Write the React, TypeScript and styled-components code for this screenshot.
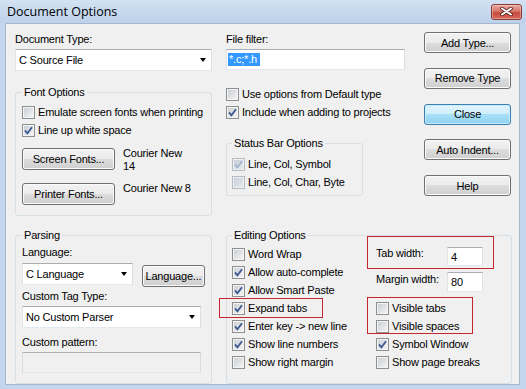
import styled, { createGlobalStyle } from "styled-components";

const GlobalStyle = createGlobalStyle`
  html, body {
    margin: 0;
    padding: 0;
  }
  body {
    font-family: "Liberation Sans", Arial, sans-serif;
    font-size: 11px;
    letter-spacing: -0.2px;
    color: #000;
    background: #c3d6ed;
  }
`

const Window = styled.div`
  width: 526px;
  height: 389px;
  display: flex;
  flex-direction: column;
  background: #c3d6ed;
  overflow: hidden;
`

const TitleBar = styled.div`
  flex: none;
  height: 23px;
  padding: 0 4px 0 7px;
  display: flex;
  align-items: center;
  justify-content: space-between;
  background: linear-gradient(#d3e2f3, #bcd1ea);
`

const Title = styled.span`
  font-family: "Open Sans", "Noto Sans", sans-serif;
  font-size: 12.5px;
  letter-spacing: 0;
`

const CloseButton = styled.div`
  width: 31px;
  height: 16px;
  box-sizing: border-box;
  border: 1px solid #8b3b36;
  border-radius: 3px;
  background: linear-gradient(#eaaaa0, #d7766a 45%, #c54a3d 55%, #d86c5e);
  box-shadow: inset 0 0 0 1px rgba(255, 255, 255, 0.3);
  display: flex;
  align-items: center;
  justify-content: center;
`

const Body = styled.div`
  flex: 1;
  margin: 0 6px 4px 5px;
  border: 1px solid #a6b8cf;
  background: #f0f0f0;
  padding: 9px 7px 0 9px;
  display: grid;
  grid-template-columns: 197px 184px 88px;
  grid-template-rows: auto 1fr;
  column-gap: 14px;
  row-gap: 13px;
`

const Column = styled.div`
  display: flex;
  flex-direction: column;
  align-items: flex-start;
`

const ButtonColumn = styled.div`
  display: flex;
  flex-direction: column;
  gap: 14.75px;
  margin-top: -1px;
`

const FieldLabel = styled.div<{ $after?: number }>`
  line-height: 13px;
  white-space: nowrap;
  margin-bottom: ${p => p.$after ?? 3}px;
`

const Group = styled.fieldset<{ $width?: number; $pad: string; $top?: number; $span?: boolean }>`
  margin: ${p => p.$top ?? 0}px 0 0;
  padding: ${p => p.$pad};
  min-width: 0;
  width: ${p => (p.$width ? `${p.$width}px` : "auto")};
  box-sizing: border-box;
  border: 1px solid #d5dfe5;
  border-radius: 3px;
  grid-column: ${p => (p.$span ? "2 / 4" : "auto")};
`

const Legend = styled.legend`
  padding: 0 2px;
  line-height: 13px;
`

const Combo = styled.div<{ $width: number }>`
  width: ${p => p.$width}px;
  height: 22px;
  box-sizing: border-box;
  border: 1px solid;
  border-color: #abadb3 #dbdfe6 #e3e9ef #e2e3ea;
  background: #fff;
  padding: 0 5px 0 3px;
  display: flex;
  align-items: center;
  justify-content: space-between;
  white-space: nowrap;
`

const Arrow = styled.span`
  width: 0;
  height: 0;
  border-left: 3.5px solid transparent;
  border-right: 3.5px solid transparent;
  border-top: 4px solid #000;
`

const TextInput = styled.div<{ $width: number; $height?: number; $disabled?: boolean }>`
  width: ${p => p.$width}px;
  height: ${p => p.$height ?? 21}px;
  box-sizing: border-box;
  border: 1px solid;
  border-color: ${p => (p.$disabled ? "#adb2b5 #d9dcde #e2e4e6 #d9dcde" : "#abadb3 #dbdfe6 #e3e9ef #e2e3ea")};
  background: ${p => (p.$disabled ? "#f0f0f0" : "#fff")};
  padding: 0 3px;
  display: flex;
  align-items: center;
  white-space: nowrap;
`

const Selected = styled.span`
  background: #3399ff;
  color: #fff;
  line-height: 13px;
  padding: 0 3px 0 1px;
  margin-left: -2px;
`

const Button = styled.div<{ $width?: number; $height?: number; $default?: boolean }>`
  width: ${p => p.$width ?? 87}px;
  height: ${p => p.$height ?? 21}px;
  box-sizing: border-box;
  border: 1px solid ${p => (p.$default ? "#3c7fb1" : "#707070")};
  border-radius: 3px;
  background: ${p =>
    p.$default
      ? "linear-gradient(#e3f4fc, #cdeefc 50%, #a9e0f8 50%, #8fd2f1)"
      : "linear-gradient(#f2f2f2, #ebebeb 50%, #dddddd 50%, #cfcfcf)"};
  box-shadow: inset 0 0 0 1px ${p => (p.$default ? "#c8ecfb" : "#fbfbfb")};
  display: flex;
  align-items: center;
  justify-content: center;
  white-space: nowrap;
  flex: none;
`

const FontRow = styled.div<{ $top: number }>`
  height: 22px;
  margin-top: ${p => p.$top}px;
  display: flex;
  align-items: flex-start;
  gap: 8px;
`

const FontName = styled.div`
  line-height: 13px;
  margin-top: -1px;
`

const LanguageRow = styled.div`
  display: flex;
  align-items: flex-start;
  gap: 9px;
  margin: 4px 0 3px;
  height: 24px;

  & > :last-child {
    margin-top: 2px;
  }
`

const CheckRowBox = styled.div`
  height: 18px;
  display: flex;
  align-items: center;
  gap: 3px;
  white-space: nowrap;
`

const Box = styled.span<{ $disabled?: boolean }>`
  flex: none;
  width: 13px;
  height: 13px;
  box-sizing: border-box;
  border: 1px solid ${p => (p.$disabled ? "#b7bbc1" : "#8e8f8f")};
  background: ${p =>
    p.$disabled ? "linear-gradient(135deg, #c3ccd7, #e9edf1)" : "linear-gradient(135deg, #c7cbd1, #f7f7f7)"};
  box-shadow: inset 0 0 0 1px ${p => (p.$disabled ? "#eef0f2" : "#f4f4f4")};
  display: flex;
  align-items: center;
  justify-content: center;
`

const EditGrid = styled.div`
  position: relative;
  display: grid;
  grid-template-columns: 144px 1fr;
`

const Stack = styled.div`
  display: flex;
  flex-direction: column;
`

const NumberRow = styled.div<{ $top: number; $inputTop: number }>`
  display: flex;
  align-items: flex-start;
  margin-top: ${p => p.$top}px;

  & > :first-child {
    width: 71px;
    padding-top: 1.5px;
    line-height: 13px;
  }
  & > :last-child {
    margin-top: ${p => p.$inputTop}px;
  }
`

const Annotation = styled.div<{ $x: number; $y: number; $w: number; $h: number }>`
  position: absolute;
  left: ${p => p.$x}px;
  top: ${p => p.$y}px;
  width: ${p => p.$w}px;
  height: ${p => p.$h}px;
  box-sizing: border-box;
  border: 1px solid #c3272d;
  pointer-events: none;
`

const CheckRow = ({ label, checked, disabled }: { label: string; checked?: boolean; disabled?: boolean }) => (
  <CheckRowBox>
    <Box $disabled={disabled}>
      {checked && (
        <svg width="9" height="9" viewBox="0 0 9 9">
          <path d="M1 4.4 L3.4 7.3 L8 1.2" fill="none" stroke={disabled ? "#9fb4cf" : "#3b5a93"} strokeWidth="1.8" />
        </svg>
      )}
    </Box>
    <span>{label}</span>
  </CheckRowBox>
)

const App = () => {
  return (
    <>
      <GlobalStyle />
      <Window>
        <TitleBar>
          <Title>Document Options</Title>
          <CloseButton>
            <svg width="13" height="9" viewBox="0 0 13 9">
              <path d="M2 1.5 L11 7.5 M11 1.5 L2 7.5" stroke="#5b2622" strokeWidth="3.6" strokeLinecap="round" />
              <path d="M2 1.5 L11 7.5 M11 1.5 L2 7.5" stroke="#fff" strokeWidth="1.9" strokeLinecap="round" />
            </svg>
          </CloseButton>
        </TitleBar>
        <Body>
          <Column>
            <FieldLabel>Document Type:</FieldLabel>
            <Combo $width={197}>
              C Source File
              <Arrow />
            </Combo>
            <Group $width={197} $top={15} $pad="4px 6px 10px">
              <Legend>Font Options</Legend>
              <CheckRow label="Emulate screen fonts when printing" />
              <CheckRow label="Line up white space" checked />
              <FontRow $top={9}>
                <Button $width={93} $height={22}>Screen Fonts...</Button>
                <FontName>
                  Courier New
                  <br />
                  14
                </FontName>
              </FontRow>
              <FontRow $top={13}>
                <Button $width={93} $height={22}>Printer Fonts...</Button>
                <FontName>Courier New 8</FontName>
              </FontRow>
            </Group>
          </Column>

          <Column>
            <FieldLabel>File filter:</FieldLabel>
            <TextInput $width={179}>
              <Selected>*.c;*.h</Selected>
            </TextInput>
            <Stack style={{ marginTop: 15 }}>
              <CheckRow label="Use options from Default type" />
              <CheckRow label="Include when adding to projects" checked />
            </Stack>
            <Group $width={137} $top={16} $pad="5px 5px 4px">
              <Legend>Status Bar Options</Legend>
              <CheckRow label="Line, Col, Symbol" checked disabled />
              <CheckRow label="Line, Col, Char, Byte" disabled />
            </Group>
          </Column>

          <ButtonColumn>
            <Button>Add Type...</Button>
            <Button>Remove Type</Button>
            <Button $default>Close</Button>
            <Button>Auto Indent...</Button>
            <Button>Help</Button>
          </ButtonColumn>

          <Group $pad="4px 6px 0">
            <Legend>Parsing</Legend>
            <FieldLabel $after={0}>Language:</FieldLabel>
            <LanguageRow>
              <Combo $width={113}>
                C Language
                <Arrow />
              </Combo>
              <Button $width={63} $height={22}>Language...</Button>
            </LanguageRow>
            <FieldLabel>Custom Tag Type:</FieldLabel>
            <Combo $width={179}>
              No Custom Parser
              <Arrow />
            </Combo>
            <FieldLabel $after={3} style={{ marginTop: 8 }}>Custom pattern:</FieldLabel>
            <TextInput $width={179} $disabled />
          </Group>

          <Group $span $pad="3px 5px 0">
            <Legend>Editing Options</Legend>
            <EditGrid>
              <Stack>
                <CheckRow label="Word Wrap" />
                <CheckRow label="Allow auto-complete" checked />
                <CheckRow label="Allow Smart Paste" checked />
                <CheckRow label="Expand tabs" checked />
                <CheckRow label="Enter key -> new line" checked />
                <CheckRow label="Show line numbers" checked />
                <CheckRow label="Show right margin" />
              </Stack>
              <Stack>
                <NumberRow $top={0} $inputTop={2}>
                  <span>Tab width:</span>
                  <TextInput $width={36} $height={19}>4</TextInput>
                </NumberRow>
                <NumberRow $top={5} $inputTop={1}>
                  <span>Margin width:</span>
                  <TextInput $width={36} $height={20}>80</TextInput>
                </NumberRow>
                <Stack style={{ marginTop: 7 }}>
                  <CheckRow label="Visible tabs" />
                  <CheckRow label="Visible spaces" />
                  <CheckRow label="Symbol Window" checked />
                  <CheckRow label="Show page breaks" />
                </Stack>
              </Stack>
              <Annotation $x={135} $y={-9} $w={127} $h={33} />
              <Annotation $x={-13} $y={53} $w={104} $h={20} />
              <Annotation $x={135} $y={52} $w={106} $h={37} />
            </EditGrid>
          </Group>
        </Body>
      </Window>
    </>
  );
};

export default App;
